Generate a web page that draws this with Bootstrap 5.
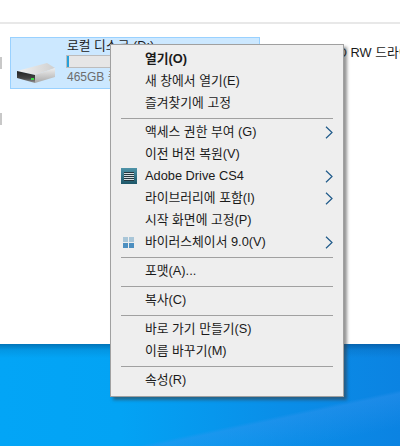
<!DOCTYPE html>
<html lang="ko"><head><meta charset="utf-8">
<link rel="stylesheet" href="https://cdn.jsdelivr.net/npm/bootstrap@5.3.0/dist/css/bootstrap.min.css">
<style>
html,body{height:446px;overflow:hidden;background:#fff}
body{font-family:"Liberation Sans","Noto Sans CJK KR",sans-serif;font-size:12.8px;color:#1a1a1a;position:relative}
.explorer{height:344px;background:#fff;padding-top:22px;position:relative}
.topline{height:2px;background:#e8e8e8;margin-bottom:13px}
.leftmark{width:2px;height:12px;background:#c8c8c8;position:absolute;left:0}
.mark-a{top:57px}
.mark-b{top:113px}
.drives{padding-left:10px}
.tile{width:250px;height:52px;background:#cce8ff;border:1px solid #99d1ff;position:relative;flex:none}
.tile-name{position:absolute;left:56px;top:0;line-height:16px;white-space:nowrap}
.tile-bar{position:absolute;left:55px;top:17px;width:190px;height:13px;background:#e6e6e6;border:1px solid #bcbcbc}
.tile-fill{width:2px;height:100%;background:#26a0da}
.tile-size{position:absolute;left:56px;top:31px;line-height:16px;color:#6d6d6d;white-space:nowrap;font-size:12px}
.hdd{position:absolute;left:6px;top:24px}
.other{white-space:nowrap;line-height:16px;margin-top:8px;margin-left:60px}
.desktop{height:102px;background:linear-gradient(180deg,rgba(0,50,100,.42) 0,rgba(0,50,100,.12) 6px,rgba(0,50,100,0) 14px),linear-gradient(168deg,rgba(255,255,255,0) 70%,rgba(60,150,240,.35) 72%,rgba(255,255,255,0) 90%),linear-gradient(90deg,#03a5f6 0,#03a3f4 30%,#0a8ee8 70%,#0b83e2 100%)}
.ctxmenu{position:absolute;left:110px;top:44px;width:234px;height:353px;background:#eeeeee;border:1px solid #a0a0a0;padding:3px 0 0;box-shadow:3px 3px 3px rgba(60,60,60,.55);z-index:5}
.mi{height:22px;line-height:22px;padding-left:34px;position:relative;white-space:nowrap;color:#1a1a1a}
.mi-b{font-weight:700}
.mi-sep{height:1px;background:#a0a0a0;margin:4px 10px 2px}
.mi-arrow{position:absolute;right:10px;top:5px}
.mi-ico{position:absolute;left:10px;top:3px}
</style></head><body>
<div class="explorer">
<div class="topline"></div>
<div class="leftmark mark-a"></div>
<div class="leftmark mark-b"></div>
<div class="d-flex drives">
<div class="tile">
<svg class="hdd" width="40" height="22" viewBox="0 0 40 22"><defs><linearGradient id="g1" x1="0" x2="1" y1="0" y2="0"><stop offset="0" stop-color="#f2f2f2"/><stop offset="1" stop-color="#cfcfcf"/></linearGradient><linearGradient id="g2" x1="0" x2="0" y1="0" y2="1"><stop offset="0" stop-color="#222"/><stop offset=".6" stop-color="#444"/><stop offset="1" stop-color="#9a9a9a"/></linearGradient><linearGradient id="g3" x1="0" x2="0" y1="0" y2="1"><stop offset="0" stop-color="#eee"/><stop offset="1" stop-color="#a8a8a8"/></linearGradient></defs><polygon points="0,9 30,1 38,6 18,13" fill="url(#g1)"/><polygon points="0,9 18,13 18,21 0,16" fill="url(#g2)"/><polygon points="18,13 38,6 38,15 18,21" fill="url(#g3)"/><rect x="14" y="16" width="3" height="2" fill="#3ddc46"/></svg>
<div class="tile-name">로컬 디스크 (D:)</div>
<div class="tile-bar"><div class="tile-fill"></div></div>
<div class="tile-size">465GB 중 100GB 사용 가능</div>
</div>
<div class="other">DVD RW 드라이브</div>
</div>
</div>
<div class="desktop"></div>
<div class="ctxmenu">
<div class="mi mi-b">열기(O)</div>
<div class="mi">새 창에서 열기(E)</div>
<div class="mi">즐겨찾기에 고정</div>
<div class="mi-sep"></div>
<div class="mi">액세스 권한 부여 (G)<svg class="mi-arrow" width="8" height="13" viewBox="0 0 8 13"><path d="M1 .8 7 6.5 1 12.2" fill="none" stroke="#1f5a8a" stroke-width="1.2"/></svg></div>
<div class="mi">이전 버전 복원(V)</div>
<div class="mi"><svg class="mi-ico" width="16" height="16" viewBox="0 0 16 16"><defs><linearGradient id="g4" x1="0" x2="0" y1="0" y2="1"><stop offset="0" stop-color="#4f93a8"/><stop offset="1" stop-color="#1d5668"/></linearGradient></defs><rect width="16" height="16" fill="url(#g4)"/><path d="M3 4.5h10M3 6.5h10M3 8.5h10M3 10.5h10M3 12.5h10" stroke="#22353c" stroke-width="1"/><path d="M3 5.5h10M3 7.5h10M3 9.5h10M3 11.5h10" stroke="#d5dde0" stroke-width="1"/></svg>Adobe Drive CS4<svg class="mi-arrow" width="8" height="13" viewBox="0 0 8 13"><path d="M1 .8 7 6.5 1 12.2" fill="none" stroke="#1f5a8a" stroke-width="1.2"/></svg></div>
<div class="mi">라이브러리에 포함(I)<svg class="mi-arrow" width="8" height="13" viewBox="0 0 8 13"><path d="M1 .8 7 6.5 1 12.2" fill="none" stroke="#1f5a8a" stroke-width="1.2"/></svg></div>
<div class="mi">시작 화면에 고정(P)</div>
<div class="mi"><svg class="mi-ico" width="16" height="16" viewBox="0 0 16 16"><rect x="2" y="3" width="5" height="5" fill="#a9c6d8"/><rect x="8" y="3" width="5" height="5" fill="#a9c6d8"/><rect x="2" y="9" width="5" height="5" fill="#4c8fc0"/><rect x="8" y="9" width="5" height="5" fill="#4c8fc0"/></svg>바이러스체이서 9.0(V)<svg class="mi-arrow" width="8" height="13" viewBox="0 0 8 13"><path d="M1 .8 7 6.5 1 12.2" fill="none" stroke="#1f5a8a" stroke-width="1.2"/></svg></div>
<div class="mi-sep"></div>
<div class="mi">포맷(A)...</div>
<div class="mi-sep"></div>
<div class="mi">복사(C)</div>
<div class="mi-sep"></div>
<div class="mi">바로 가기 만들기(S)</div>
<div class="mi">이름 바꾸기(M)</div>
<div class="mi-sep"></div>
<div class="mi">속성(R)</div>
</div>
<script src="https://cdn.jsdelivr.net/npm/bootstrap@5.3.0/dist/js/bootstrap.bundle.min.js"></script>
</body></html>
